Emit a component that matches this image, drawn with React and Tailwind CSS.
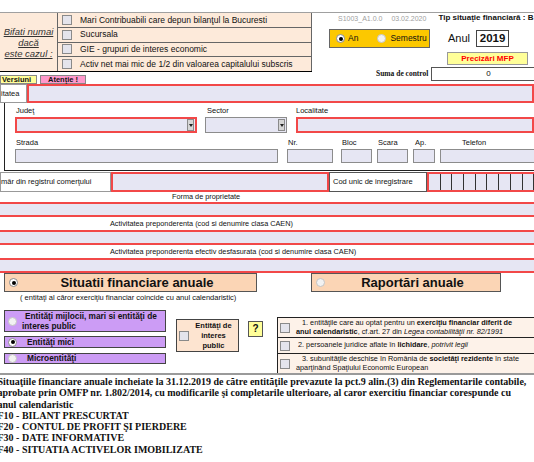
import React from 'react';

const bifari = [
  'Mari Contribuabili care depun bilanţul la Bucuresti',
  'Sucursala',
  'GIE - grupuri de interes economic',
  'Activ net mai mic de 1/2 din valoarea capitalului subscris',
];

const Check = ({ className = '' }) => (
  <span className={`block w-[10px] h-[10px] shrink-0 border border-[#8a8a8a] bg-[#e4e4ec] ${className}`} />
);

const Radio = ({ on, className = '' }) =>
  on ? (
    <span className={`flex w-[9px] h-[9px] shrink-0 rounded-full bg-white border border-[#8a8a8a] items-center justify-center ${className}`}>
      <span className="block w-[4px] h-[4px] rounded-full bg-black" />
    </span>
  ) : (
    <span className={`block w-[9px] h-[9px] shrink-0 rounded-full bg-[#f2f2f2] border border-[#c4c4c4] ${className}`} />
  );

const Drop = () => (
  <span className="flex w-[7px] h-[12px] mr-[1px] bg-[#d6d6d6] border border-[#8a8a8a] items-center justify-center">
    <span className="block w-0 h-0 border-l-[2px] border-r-[2px] border-t-[3px] border-l-transparent border-r-transparent border-t-[#222]" />
  </span>
);

function Field({ label, box, lab = '', red, drop, h }) {
  return (
    <div className={`flex flex-col shrink-0 ${box}`}>
      <span className={`h-[8px] leading-[8px] whitespace-nowrap ${lab}`}>{label}</span>
      <div
        className={`mt-[2px] ${h} bg-[#e6e6f3] flex justify-end items-center ${
          red ? 'border-2 border-[#f24848]' : 'border border-[#8c8c8c]'
        }`}
      >
        {drop && <Drop />}
      </div>
    </div>
  );
}

const Band = () => <div className="h-[15px] border-y-2 border-[#f24848] bg-[#e6e6f3]" />;

export default function App() {
  return (
    <div className="w-[534px] h-[462px] overflow-hidden bg-white text-[#111] font-['Liberation_Sans',Arial,sans-serif] leading-none">
      {/* antet */}
      <div className="h-[12px]" />
      <div className="flex h-[72px] border-t border-[#a0a0a0]">
        <div className="w-[312px] shrink-0 flex flex-col">
          <div className="flex h-[59px] border-b border-black">
            <div className="w-[58px] shrink-0 bg-[#fdeada] border-r border-[#666] flex flex-col items-center justify-center italic text-[9.5px] leading-[11px] text-[#333]">
              <span className="underline">Bifati numai</span>
              <span className="underline">dacă</span>
              <span className="underline">este cazul :</span>
            </div>
            <div className="flex-1 flex flex-col">
              {bifari.map((t, i) => (
                <div
                  key={t}
                  className={`flex-1 flex items-center bg-[#fdeada] border-r border-[#666] ${i < 3 ? 'border-b' : ''}`}
                >
                  <Check className="ml-[4px]" />
                  <span className="ml-[8px] text-[8.5px] whitespace-nowrap">{t}</span>
                </div>
              ))}
            </div>
          </div>
          <div className="flex mt-[3px] h-[9px] text-[7.5px] font-bold">
            <div className="w-[37px] bg-[#ffff99] border border-[#888] flex items-center pl-[1px]">Versiuni</div>
            <div className="ml-[3px] w-[46px] bg-[#ff99cc] border border-[#888] flex items-center justify-center">
              Atenţie !
            </div>
          </div>
        </div>

        <div className="flex-1 flex flex-col">
          <div className="h-[10px] flex items-center whitespace-nowrap">
            <span className="ml-[26px] text-[7px] text-[#a0a0a0]">S1003_A1.0.0</span>
            <span className="ml-[9px] text-[7px] text-[#a0a0a0]">03.02.2020</span>
            <span className="ml-[12px] text-[8px] font-bold">Tip situaţie financiară : B</span>
          </div>
          <div className="mt-[6px] flex items-center h-[19px]">
            <div className="ml-[17px] w-[101px] shrink-0 h-full bg-[#fcc800] border border-[#666] flex items-center text-[8.5px]">
              <Radio on className="ml-[6px]" />
              <span className="ml-[3px]">An</span>
              <Radio className="ml-[19px]" />
              <span className="ml-[4px]">Semestru</span>
            </div>
            <span className="ml-[18px] text-[11px]">Anul</span>
            <div className="ml-[6px] w-[33px] h-[17px] border border-[#444] flex items-center justify-center text-[11.5px] font-bold">
              2019
            </div>
          </div>
          <div className="mt-[4px] ml-[135px] w-[81px] h-[13px] bg-[#ffff99] border border-[#999] flex items-center justify-center text-[8px] font-bold text-[#ff0000]">
            Precizări MFP
          </div>
          <div className="mt-[2px] h-[14px] flex items-center whitespace-nowrap">
            <span className="ml-[64px] text-[7.5px] font-bold font-['Liberation_Serif',serif]">Suma de control</span>
            <div className="ml-[3px] w-[114px] shrink-0 h-full border border-[#555] flex items-center justify-center text-[8px]">
              0
            </div>
          </div>
        </div>
      </div>

      {/* entitatea */}
      <div className="flex h-[19px] text-[7.5px]">
        <div className="w-[27px] shrink-0 border border-[#999] flex items-center">itatea</div>
        <div className="flex-1 border-2 border-[#f24848] bg-[#e6e6f3]" />
      </div>

      {/* adresa */}
      <div className="ml-[4px] h-[68px] border-l border-b border-[#222] flex flex-col text-[7.5px]">
        <div className="flex mt-[4px]">
          <Field label="Judeţ" box="ml-[10px] w-[182px]" lab="pl-[1px]" red drop h="h-[16px]" />
          <Field label="Sector" box="ml-[8px] w-[82px]" lab="pl-[2px]" drop h="h-[16px]" />
          <Field label="Localitate" box="ml-[9px] w-[238px]" red h="h-[16px]" />
        </div>
        <div className="flex mt-[6px]">
          <Field label="Strada" box="ml-[10px] w-[263px]" lab="pl-[1px]" h="h-[14px]" />
          <Field label="Nr." box="ml-[9px] w-[46px]" lab="pl-[1px]" h="h-[14px]" />
          <Field label="Bloc" box="ml-[8px] w-[31px]" lab="pl-[1px]" h="h-[14px]" />
          <Field label="Scara" box="ml-[5px] w-[31px]" lab="pl-[1px]" h="h-[14px]" />
          <Field label="Ap." box="ml-[5px] w-[22px]" lab="pl-[2px]" h="h-[14px]" />
          <Field label="Telefon" box="ml-[5px] w-[100px]" lab="pl-[22px]" h="h-[14px]" />
        </div>
      </div>

      {/* registru / cui */}
      <div className="mt-[1px] h-[20px] flex text-[7.5px]">
        <div className="w-[111px] shrink-0 border border-[#999] flex items-center whitespace-nowrap">
          mǎr din registrul comerţului
        </div>
        <div className="w-[218px] shrink-0 border-2 border-[#f24848] bg-[#e6e6f3]" />
        <div className="w-[98px] shrink-0 border border-[#555] flex items-center pl-[3px] whitespace-nowrap">
          Cod unic de inregistrare
        </div>
        <div className="flex-1 border-2 border-[#f24848] bg-[#e6e6f3] flex">
          {Array.from({ length: 9 }).map((_, i) => (
            <div key={i} className="w-[11.7px] shrink-0 h-full border-r border-[#333]" />
          ))}
        </div>
      </div>

      {/* forma / caen */}
      <div className="h-[10px] flex items-center pl-[172px] text-[7.3px]">Forma de proprietate</div>
      <Band />
      <div className="h-[13px] flex items-center pl-[110px] text-[7.3px] whitespace-nowrap">
        Activitatea preponderenta (cod si denumire clasa CAEN)
      </div>
      <Band />
      <div className="h-[13px] flex items-center pl-[110px] text-[7.3px] whitespace-nowrap">
        Activitatea preponderenta efectiv desfasurata (cod si denumire clasa CAEN)
      </div>
      <Band />

      {/* tip raportare */}
      <div className="flex h-[19px]">
        <div className="ml-[4px] w-[253px] shrink-0 bg-[#fbd5b5] border border-[#555] flex items-center">
          <Radio on className="ml-[4px]" />
          <span className="flex-1 text-center text-[13px] font-bold">Situatii financiare anuale</span>
        </div>
        <div className="ml-[54px] w-[190px] shrink-0 bg-[#fbd5b5] border border-[#555] flex items-center">
          <Radio className="ml-[4px]" />
          <span className="flex-1 text-center text-[13px] font-bold">Raportări anuale</span>
        </div>
      </div>
      <div className="mt-[1px] h-[9px] flex items-center pl-[20px] text-[7.5px] whitespace-nowrap">
        ( entitaţi al căror exerciţiu financiar coincide cu anul calendaristic)
      </div>

      <div className="flex h-[71px]">
        <div className="ml-[4px] w-[162px] shrink-0 pt-[8px] flex flex-col font-bold text-[8.3px]">
          <div className="h-[22px] bg-[#cc9cf5] border border-[#444] flex items-center">
            <Radio className="ml-[3px]" />
            <span className="ml-[5px] leading-[10px] indent-[3px]">Entităţi mijlocii, mari si entităţi de interes public</span>
          </div>
          <div className="mt-[4px] h-[12px] bg-[#cc9cf5] border border-[#444] flex items-center">
            <Radio on className="ml-[3px]" />
            <span className="ml-[10px]">Entităţi mici</span>
          </div>
          <div className="mt-[5px] h-[11px] bg-[#cc9cf5] border border-[#444] flex items-center">
            <Radio className="ml-[3px]" />
            <span className="ml-[10px]">Microentităţi</span>
          </div>
        </div>

        <div className="ml-[10px] mt-[17px] w-[63px] h-[33px] shrink-0 bg-[#fde4d0] border border-[#444] flex items-center">
          <Check className="ml-[2px]" />
          <span className="flex-1 text-center font-bold text-[7.5px] leading-[10px]">
            Entităţi de
            <br />
            interes
            <br />
            public
          </span>
        </div>

        <div className="ml-[9px] mt-[19px] w-[15px] h-[16px] shrink-0 bg-[#ffff99] border border-[#555] flex items-center justify-center font-bold text-[10px]">
          ?
        </div>

        <div className="ml-[14px] mt-[15px] flex-1 flex flex-col text-[7.3px] leading-[8.5px] whitespace-nowrap">
          <div className="h-[20px] bg-[#fdf2e9] border-t border-l border-[#222] flex items-center">
            <Check className="ml-[2px]" />
            <span className="ml-[6px] indent-[6px]">
              1. entităţile care au optat pentru un <b>exerciţiu financiar diferit de</b>
              <br />
              <b>anul calendaristic</b>, cf.art. 27 din <i>Legea contabilităţii nr. 82/1991</i>
            </span>
          </div>
          <div className="h-[16px] bg-[#fdf2e9] border-t border-l border-[#222] flex items-center">
            <Check className="ml-[2px]" />
            <span className="ml-[8px]">
              2. persoanele juridice aflate în <b>lichidare</b>, <i>potrivit legii</i>
            </span>
          </div>
          <div className="h-[20px] bg-[#fdf2e9] border-t border-l border-[#222] flex items-center">
            <Check className="ml-[2px]" />
            <span className="ml-[6px] indent-[6px]">
              3. subunităţile deschise în România de <b>societăţi rezidente</b> în state
              <br />
              aparţinând Spaţiului Economic European
            </span>
          </div>
        </div>
      </div>
      <div className="h-[2px] bg-[#9a9a9a]" />

      {/* lista formulare */}
      <div className="mt-[1px] ml-[-2.5px] font-['Liberation_Serif',serif] font-bold text-[10px] leading-[11.3px] whitespace-nowrap">
        Situaţiile financiare anuale incheiate la 31.12.2019 de către entităţile prevazute la pct.9 alin.(3) din
        Reglementarile contabile,
        <br />
        aprobate prin OMFP nr. 1.802/2014, cu modificarile şi completarile ulterioare, al caror exercitiu financiar
        corespunde cu
        <br />
        anul calendaristic
        <br />
        F10 - BILANT PRESCURTAT
        <br />
        F20 - CONTUL DE PROFIT ŞI PIERDERE
        <br />
        F30 - DATE INFORMATIVE
        <br />
        F40 - SITUATIA ACTIVELOR IMOBILIZATE
      </div>
    </div>
  );
}
